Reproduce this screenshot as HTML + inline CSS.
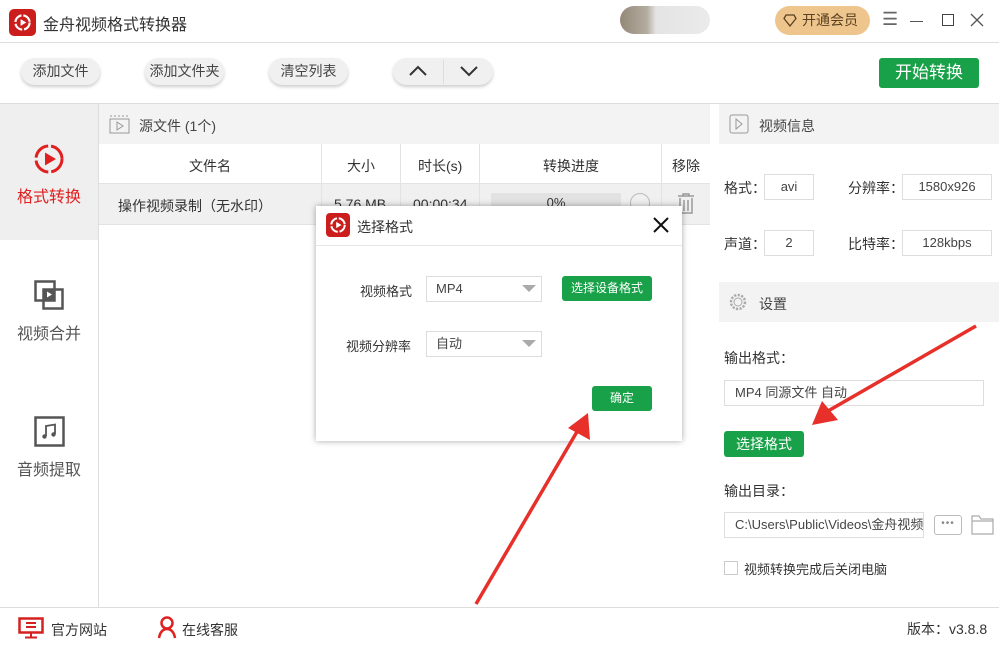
<!DOCTYPE html>
<html><head><meta charset="utf-8">
<style>
*{margin:0;padding:0;box-sizing:border-box}
body{width:999px;height:647px;overflow:hidden;background:#fff;font-family:"Liberation Sans","Noto Sans CJK SC",sans-serif;color:#333;position:relative;font-size:14px}
.a{position:absolute}
.btn{position:absolute;top:58px;height:27px;border-radius:14px;background:#f0f0f0;box-shadow:0 2px 3px rgba(0,0,0,.2);font-size:14px;color:#444;text-align:center;line-height:27px}
.inp{position:absolute;border:1px solid #ddd;background:#fff;font-size:13px;color:#444;text-align:center;line-height:24px;height:26px}
.hdr{position:absolute;background:#f3f3f3}
.g{position:absolute;background:#18a148;color:#fff;border-radius:3px;text-align:center}
.col{position:absolute;top:144px;height:80px;width:1px;background:#e3e3e3}
</style></head><body>
<!-- title bar -->
<div class="a" style="left:9px;top:9px;width:27px;height:27px;border-radius:5px;background:#cc1d1d"></div>
<svg class="a" style="left:13px;top:13px" width="19" height="19" viewBox="0 0 20 20"><circle cx="10" cy="10" r="7.5" fill="none" stroke="#fff" stroke-width="2.2" stroke-dasharray="10 2"/><path d="M8 6.5L14 10L8 13.5Z" fill="#fff"/></svg>
<div class="a" style="left:43px;top:11px;font-size:16px;color:#333">金舟视频格式转换器</div>
<div class="a" style="left:620px;top:6px;width:90px;height:28px;border-radius:14px;background:linear-gradient(90deg,#7a6a55 0,#a09888 30%,#ddd 40%,#e6e6e6 100%);opacity:.8"></div>
<div class="a" style="left:775px;top:6px;width:95px;height:29px;border-radius:15px;background:#eec68d;color:#5a4020;font-size:14px;line-height:29px;text-align:right;padding-right:12px">开通会员</div>
<svg class="a" style="left:783px;top:14px" width="14" height="13" viewBox="0 0 14 13"><path d="M3 1H11L13 4.5L7 12L1 4.5Z" fill="none" stroke="#5a4020" stroke-width="1.3"/></svg>
<div class="a" style="left:882px;top:9px;font-size:18px;color:#666">☰</div>
<div class="a" style="left:910px;top:21px;width:13px;height:1px;background:#555"></div>
<div class="a" style="left:942px;top:14px;width:12px;height:12px;border:1.5px solid #444"></div>
<svg class="a" style="left:970px;top:13px" width="14" height="14"><path d="M1 1L13 13M13 1L1 13" stroke="#555" stroke-width="1.3"/></svg>
<div class="a" style="left:0;top:42px;width:999px;height:1px;background:#ddd"></div>
<!-- toolbar -->
<div class="btn" style="left:21px;width:79px">添加文件</div>
<div class="btn" style="left:145px;width:79px">添加文件夹</div>
<div class="btn" style="left:269px;width:79px">清空列表</div>
<div class="btn" style="left:393px;width:100px"></div>
<div class="a" style="left:443px;top:60px;width:1px;height:24px;background:#ddd"></div>
<svg class="a" style="left:408px;top:64px" width="20" height="14"><path d="M2 11L10 3L18 11" fill="none" stroke="#333" stroke-width="2"/></svg>
<svg class="a" style="left:459px;top:64px" width="20" height="14"><path d="M2 3L10 11L18 3" fill="none" stroke="#333" stroke-width="2"/></svg>
<div class="g" style="left:879px;top:58px;width:100px;height:30px;line-height:30px;font-size:17px">开始转换</div>
<div class="a" style="left:0;top:103px;width:999px;height:1px;background:#ddd"></div>
<!-- sidebar -->
<div class="a" style="left:0;top:104px;width:98px;height:136px;background:#efefef"></div>
<div class="a" style="left:98px;top:104px;width:1px;height:503px;background:#ddd"></div>
<svg class="a" style="left:33px;top:143px" width="32" height="32" viewBox="0 0 32 32"><circle cx="16" cy="16" r="13" fill="none" stroke="#e02020" stroke-width="3" stroke-dasharray="18 3"/><path d="M12 9.5L23 16L12 22.5Z" fill="#e02020"/></svg>
<div class="a" style="left:17px;top:183px;font-size:16px;color:#e02020">格式转换</div>
<svg class="a" style="left:34px;top:280px" width="32" height="31"><rect x="1.5" y="1.5" width="19" height="19" fill="#fff" stroke="#555" stroke-width="2.5"/><rect x="9.5" y="9.5" width="19" height="19" fill="none" stroke="#555" stroke-width="2.5"/><rect x="9" y="9" width="11" height="11" fill="#555"/><path d="M13 11.5L18 14.5L13 17.5Z" fill="#fff"/></svg>
<div class="a" style="left:17px;top:320px;font-size:16px;color:#555">视频合并</div>
<svg class="a" style="left:34px;top:416px" width="31" height="31"><rect x="1.5" y="1.5" width="28" height="28" fill="none" stroke="#555" stroke-width="2.5"/><path d="M12 20V10L21 8.5V18" fill="none" stroke="#555" stroke-width="1.8"/><circle cx="10.5" cy="20.5" r="2.2" fill="#555"/><circle cx="19.5" cy="18.5" r="2.2" fill="#555"/></svg>
<div class="a" style="left:17px;top:456px;font-size:16px;color:#555">音频提取</div>
<!-- center -->
<div class="hdr" style="left:99px;top:104px;width:611px;height:40px"></div>
<svg class="a" style="left:109px;top:114px" width="21" height="20"><rect x="1" y="5" width="19" height="14" fill="none" stroke="#999"/><path d="M1 2H20" stroke="#999" stroke-dasharray="2 2"/><path d="M8 8L14 12L8 16Z" fill="none" stroke="#999"/></svg>
<div class="a" style="left:139px;top:116px;font-size:14px;color:#444">源文件 (1个)</div>
<div class="a" style="left:99px;top:183px;width:611px;height:1px;background:#e3e3e3"></div>
<div class="a" style="left:99px;top:184px;width:611px;height:40px;background:#f0f0f0"></div>
<div class="a" style="left:99px;top:224px;width:611px;height:1px;background:#e3e3e3"></div>
<div class="col" style="left:321px"></div><div class="col" style="left:400px"></div><div class="col" style="left:479px"></div><div class="col" style="left:661px"></div>
<div class="a" style="left:189px;top:156px">文件名</div>
<div class="a" style="left:347px;top:156px">大小</div>
<div class="a" style="left:418px;top:156px">时长(s)</div>
<div class="a" style="left:543px;top:156px">转换进度</div>
<div class="a" style="left:672px;top:156px">移除</div>
<div class="a" style="left:118px;top:196px">操作视频录制（无水印）</div>
<div class="a" style="left:334px;top:196px">5.76 MB</div>
<div class="a" style="left:413px;top:196px">00:00:34</div>
<div class="a" style="left:491px;top:193px;width:130px;height:20px;background:#e2e2e2;text-align:center;font-size:13px;line-height:20px">0%</div>
<div class="a" style="left:630px;top:193px;width:20px;height:20px;border-radius:50%;border:1.5px solid #bbb"></div>
<svg class="a" style="left:676px;top:193px" width="20" height="22"><path d="M2 3H18M7 3V1H13V3M4 5V20H16V5M8 7V18M12 7V18" fill="none" stroke="#999" stroke-width="1.5"/></svg>
<!-- right -->
<div class="hdr" style="left:719px;top:104px;width:280px;height:40px"></div>
<svg class="a" style="left:729px;top:114px" width="20" height="20"><rect x="1" y="1" width="18" height="18" rx="2" fill="none" stroke="#999"/><path d="M7 5L13 10L7 15Z" fill="none" stroke="#999"/></svg>
<div class="a" style="left:759px;top:116px;color:#444">视频信息</div>
<div class="a" style="left:724px;top:178px">格式：</div><div class="inp" style="left:764px;top:174px;width:50px">avi</div>
<div class="a" style="left:848px;top:178px">分辨率：</div><div class="inp" style="left:902px;top:174px;width:90px">1580x926</div>
<div class="a" style="left:724px;top:234px">声道：</div><div class="inp" style="left:764px;top:230px;width:50px">2</div>
<div class="a" style="left:848px;top:234px">比特率：</div><div class="inp" style="left:902px;top:230px;width:90px">128kbps</div>
<div class="hdr" style="left:719px;top:282px;width:280px;height:40px"></div>
<svg class="a" style="left:728px;top:292px" width="20" height="20" viewBox="0 0 20 20"><circle cx="10" cy="10" r="7" fill="none" stroke="#aaa" stroke-width="2.5" stroke-dasharray="2.2 1.4"/><circle cx="10" cy="10" r="4" fill="none" stroke="#aaa"/></svg>
<div class="a" style="left:759px;top:294px;color:#444">设置</div>
<div class="a" style="left:724px;top:348px">输出格式：</div>
<div class="inp" style="left:724px;top:380px;width:260px;text-align:left;padding-left:10px">MP4 同源文件 自动</div>
<div class="g" style="left:724px;top:431px;width:80px;height:26px;line-height:26px;font-size:14px">选择格式</div>
<div class="a" style="left:724px;top:481px">输出目录：</div>
<div class="inp" style="left:724px;top:512px;width:200px;text-align:left;padding-left:10px;overflow:hidden;white-space:nowrap">C:\Users\Public\Videos\金舟视频</div>
<div class="a" style="left:934px;top:515px;width:28px;height:20px;border:1px solid #bbb;border-radius:3px;text-align:center;font-size:10px;line-height:16px;color:#888;letter-spacing:1px">•••</div>
<svg class="a" style="left:971px;top:514px" width="23" height="21"><path d="M1 4V20H22V5H10L8 2H1Z M1 7H22" fill="none" stroke="#aaa" stroke-width="1.2"/></svg>
<div class="a" style="left:724px;top:561px;width:14px;height:14px;border:1px solid #ccc"></div>
<div class="a" style="left:744px;top:559px;font-size:13px">视频转换完成后关闭电脑</div>
<!-- footer -->
<div class="a" style="left:0;top:607px;width:999px;height:1px;background:#ddd"></div>
<svg class="a" style="left:18px;top:617px" width="26" height="22"><rect x="1.5" y="1.5" width="23" height="14" fill="none" stroke="#d42020" stroke-width="2.5"/><path d="M8 6H18M8 10H18M13 16V20M7 20.5H19" stroke="#d42020" stroke-width="2"/></svg>
<div class="a" style="left:51px;top:620px;color:#333">官方网站</div>
<svg class="a" style="left:157px;top:615px" width="20" height="24"><circle cx="10" cy="8" r="5.5" fill="none" stroke="#e02020" stroke-width="2.5"/><path d="M2 23C3 17 6 14 10 14C14 14 17 17 18 23" fill="none" stroke="#e02020" stroke-width="2.5"/></svg>
<div class="a" style="left:182px;top:620px;color:#333">在线客服</div>
<div class="a" style="left:907px;top:619px;color:#333">版本：v3.8.8</div>
<!-- dialog -->
<div class="a" style="left:316px;top:206px;width:366px;height:235px;background:#fff;box-shadow:0 0 6px rgba(0,0,0,.35)"></div>
<div class="a" style="left:316px;top:245px;width:366px;height:1px;background:#e6e6e6"></div>
<div class="a" style="left:326px;top:213px;width:24px;height:24px;border-radius:4px;background:#cc1d1d"></div>
<svg class="a" style="left:329px;top:216px" width="18" height="18" viewBox="0 0 20 20"><circle cx="10" cy="10" r="7.5" fill="none" stroke="#fff" stroke-width="2.2" stroke-dasharray="10 2"/><path d="M8 6.5L14 10L8 13.5Z" fill="#fff"/></svg>
<div class="a" style="left:357px;top:217px;font-size:14px;color:#333">选择格式</div>
<svg class="a" style="left:653px;top:217px" width="16" height="16"><path d="M1 1L15 15M15 1L1 15" stroke="#111" stroke-width="2"/></svg>
<div class="a" style="left:360px;top:281px;font-size:13px">视频格式</div>
<div class="inp" style="left:426px;top:276px;width:116px;text-align:left;padding-left:9px;line-height:24px">MP4</div>
<svg class="a" style="left:522px;top:285px" width="14" height="8"><path d="M0 0H14L7 7Z" fill="#aaa"/></svg>
<div class="g" style="left:562px;top:276px;width:90px;height:25px;line-height:25px;font-size:12px">选择设备格式</div>
<div class="a" style="left:346px;top:336px;font-size:13px">视频分辨率</div>
<div class="inp" style="left:426px;top:331px;width:116px;text-align:left;padding-left:9px">自动</div>
<svg class="a" style="left:522px;top:340px" width="14" height="8"><path d="M0 0H14L7 7Z" fill="#aaa"/></svg>
<div class="g" style="left:592px;top:386px;width:60px;height:25px;line-height:25px;font-size:12px">确定</div>
<!-- red arrows -->
<svg class="a" style="left:0;top:0" width="999" height="647">
<path d="M976 326L828 411" stroke="#e8302a" stroke-width="3.5"/>
<path d="M812 425L822 401L838 420Z" fill="#e8302a"/>
<path d="M476 604L578 430" stroke="#e8302a" stroke-width="3.5"/>
<path d="M588 413L590 440L568 428Z" fill="#e8302a"/>
</svg>
</body></html>
